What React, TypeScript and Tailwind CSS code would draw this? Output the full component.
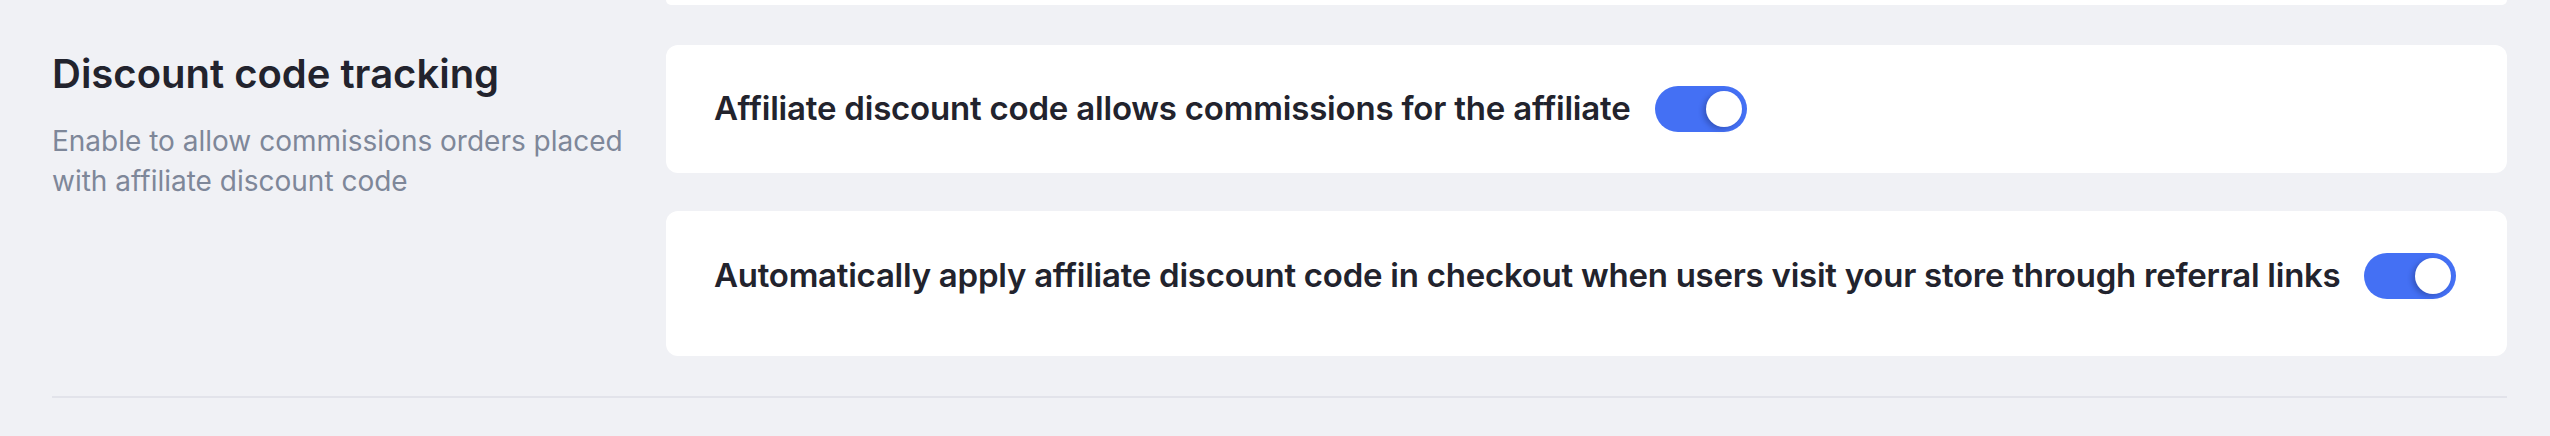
import React from 'react';

function Toggle() {
  return (
    <div className="flex h-[46px] w-[92px] shrink-0 items-center justify-end rounded-full bg-[#4470f4] pr-[5px]">
      <div className="h-[36px] w-[36px] rounded-full bg-white shadow-[-3px_2px_5px_rgba(20,30,80,0.3)]" />
    </div>
  );
}

export default function App() {
  return (
    <div className="min-h-screen bg-[#f0f1f5] pl-[52px] pr-[43px] font-['Inter',sans-serif]">
      {/* tail of the previous section */}
      <div className="grid grid-cols-[614px_1fr]">
        <div />
        <div className="h-[5px] rounded-b-[12px] bg-white" />
      </div>

      <div className="mt-[40px] grid grid-cols-[614px_1fr]">
        <div className="pt-[5px]">
          <h2 className="text-[40px] leading-[48px] font-semibold text-[#22232d]">Discount code tracking</h2>
          <p className="mt-[23px] pr-[30px] text-[28px] leading-[40px] text-[#7e8799]">
            Enable to allow commissions orders placed with affiliate discount code
          </p>
        </div>

        <div className="flex flex-col gap-[38px]">
          <div className="flex h-[128px] items-center gap-[25px] rounded-[12px] bg-white px-[48px]">
            <span className="whitespace-nowrap text-[33px] font-semibold tracking-[-0.2px] text-[#22232d]">
              Affiliate discount code allows commissions for the affiliate
            </span>
            <Toggle />
          </div>
          <div className="flex items-center gap-[24px] rounded-[12px] bg-white px-[48px] pt-[40px] pb-[55px]">
            <span className="whitespace-nowrap text-[33px] font-semibold tracking-[-0.25px] text-[#22232d]">
              Automatically apply affiliate discount code in checkout when users visit your store through referral links
            </span>
            <Toggle />
          </div>
        </div>
      </div>

      <div className="mt-[40px] h-[2px] bg-[#e2e3ea]" />
    </div>
  );
}
